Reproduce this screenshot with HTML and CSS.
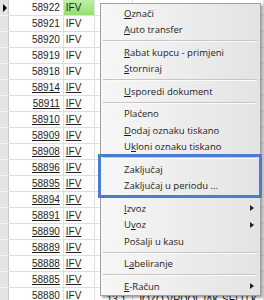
FILE: index.html
```html
<!DOCTYPE html>
<html>
<head>
<meta charset="utf-8">
<link rel="stylesheet" href="styles.css">
</head>
<body>
<div class="screen">
  <div class="grid">
    <div class="row current"><div class="rh"><span class="ptr"></span></div><div class="num">58922</div><div class="code sel">IFV</div><div class="date"></div><div class="name"></div></div>
    <div class="row"><div class="rh"></div><div class="num">58921</div><div class="code">IFV</div><div class="date"></div><div class="name"></div></div>
    <div class="row"><div class="rh"></div><div class="num">58920</div><div class="code">IFV</div><div class="date"></div><div class="name"></div></div>
    <div class="row"><div class="rh"></div><div class="num">58919</div><div class="code">IFV</div><div class="date"></div><div class="name"></div></div>
    <div class="row"><div class="rh"></div><div class="num">58918</div><div class="code">IFV</div><div class="date"></div><div class="name"></div></div>
    <div class="row link"><div class="rh"></div><div class="num">58914</div><div class="code">IFV</div><div class="date"></div><div class="name"></div></div>
    <div class="row link"><div class="rh"></div><div class="num">58911</div><div class="code">IFV</div><div class="date"></div><div class="name"></div></div>
    <div class="row link"><div class="rh"></div><div class="num">58910</div><div class="code">IFV</div><div class="date"></div><div class="name"></div></div>
    <div class="row link"><div class="rh"></div><div class="num">58909</div><div class="code">IFV</div><div class="date"></div><div class="name"></div></div>
    <div class="row link"><div class="rh"></div><div class="num">58908</div><div class="code">IFV</div><div class="date"></div><div class="name"></div></div>
    <div class="row link"><div class="rh"></div><div class="num">58896</div><div class="code">IFV</div><div class="date"></div><div class="name"></div></div>
    <div class="row link"><div class="rh"></div><div class="num">58895</div><div class="code">IFV</div><div class="date"></div><div class="name"></div></div>
    <div class="row link"><div class="rh"></div><div class="num">58894</div><div class="code">IFV</div><div class="date"></div><div class="name"></div></div>
    <div class="row link"><div class="rh"></div><div class="num">58891</div><div class="code">IFV</div><div class="date"></div><div class="name"></div></div>
    <div class="row link"><div class="rh"></div><div class="num">58890</div><div class="code">IFV</div><div class="date"></div><div class="name"></div></div>
    <div class="row link"><div class="rh"></div><div class="num">58889</div><div class="code">IFV</div><div class="date"></div><div class="name"></div></div>
    <div class="row link"><div class="rh"></div><div class="num">58888</div><div class="code">IFV</div><div class="date"></div><div class="name"></div></div>
    <div class="row link"><div class="rh"></div><div class="num">58885</div><div class="code">IFV</div><div class="date"></div><div class="name"></div></div>
    <div class="row link last"><div class="rh"></div><div class="num">58880</div><div class="code">IFV</div><div class="date">13.1</div><div class="name">JOZO VRDOLJAK SELU K</div></div>
  </div>

  <div class="menu">
    <div class="item"><span><u>O</u>znači</span></div>
    <div class="item"><span><u>A</u>uto transfer</span></div>
    <div class="sep"></div>
    <div class="item"><span><u>R</u>abat kupcu - primjeni</span></div>
    <div class="item"><span><u>S</u>torniraj</span></div>
    <div class="sep"></div>
    <div class="item"><span><u>U</u>sporedi dokument</span></div>
    <div class="sep"></div>
    <div class="item"><span>Plaćeno</span></div>
    <div class="item"><span><u>D</u>odaj oznaku tiskano</span></div>
    <div class="item"><span>U<u>k</u>loni oznaku tiskano</span></div>
    <div class="sep"></div>
    <div class="item"><span>Zaključaj</span></div>
    <div class="item"><span>Zaključaj u periodu ...</span></div>
    <div class="sep"></div>
    <div class="item"><span><u>I</u>zvoz</span><i class="arrow"></i></div>
    <div class="item"><span>U<u>v</u>oz</span><i class="arrow"></i></div>
    <div class="item"><span>Pošalji u kasu</span></div>
    <div class="sep"></div>
    <div class="item"><span>L<u>a</u>beliranje</span></div>
    <div class="sep"></div>
    <div class="item"><span><u>E</u>-Račun</span><i class="arrow"></i></div>
  </div>

  <div class="mark"></div>
</div>
</body>
</html>
```

FILE: styles.css
```css
* { box-sizing: border-box; }
html, body { margin: 0; padding: 0; background: #fff; }
.screen {
  position: relative;
  width: 264px;
  height: 300px;
  overflow: hidden;
}
.grid {
  display: flex;
  flex-direction: column;
  font-family: "Liberation Sans", Arial, sans-serif;
  font-size: 10px;
  color: #1e1e1e;
}
.row {
  display: flex;
  height: 16px;
  line-height: 15px;
  flex: none;
}
.row > div {
  border-bottom: 1px solid #dedede;
  border-right: 1px solid #dedede;
  white-space: nowrap;
  overflow: hidden;
}
.rh {
  width: 10px;
  background: #e4e4e4;
  border-right: 1px solid #c9c9c9 !important;
  border-bottom: 1px solid #f4f4f4 !important;
  position: relative;
}
.ptr {
  position: absolute;
  left: 3px;
  top: 4px;
  width: 0;
  height: 0;
  border-left: 4px solid #000;
  border-top: 4px solid transparent;
  border-bottom: 4px solid transparent;
}
.num {
  width: 58px;
  text-align: right;
  padding-right: 3px;
}
.code {
  width: 33px;
  padding-left: 2px;
}
.sel {
  background: linear-gradient(#bdf0a4, #92df70);
}
.date { width: 40px; padding-left: 12px; }
.name { width: 140px; padding-left: 4px; }
.last .date, .last .name { padding-top: 8px; line-height: 8px; }
.link .num, .link .code { text-decoration: underline; }

.menu {
  position: absolute;
  left: 100px;
  top: 3px;
  width: 161px;
  height: 293px;
  border: 1px solid #a0a0a0;
  background: linear-gradient(to right, #f7f7f7, #e3e3e3);
  box-shadow: 2px 2px 2px rgba(0, 0, 0, 0.35);
  padding: 1px 0;
  display: flex;
  flex-direction: column;
  font-family: "Open Sans", "Noto Sans", sans-serif;
  font-size: 9.5px;
  color: #1c1c1c;
}
.item {
  height: 16.5px;
  flex: none;
  display: flex;
  align-items: center;
  padding-left: 23px;
  padding-right: 6px;
}
.item u { text-decoration: underline; text-underline-offset: 1px; }
.arrow {
  margin-left: auto;
  width: 0;
  height: 0;
  border-left: 4px solid #222;
  border-top: 3.5px solid transparent;
  border-bottom: 3.5px solid transparent;
}
.sep {
  height: 6px;
  flex: none;
  margin: 0 3px 0 2px;
  display: flex;
  flex-direction: column;
  justify-content: center;
}
.sep::before {
  content: "";
  display: block;
  height: 1px;
  background: #c6c6c6;
}
.sep::after {
  content: "";
  display: block;
  height: 1px;
  background: #fbfbfb;
}
.mark {
  position: absolute;
  left: 98px;
  top: 154px;
  width: 164px;
  height: 44px;
  border: 3px solid #4a7dd0;
}
```
